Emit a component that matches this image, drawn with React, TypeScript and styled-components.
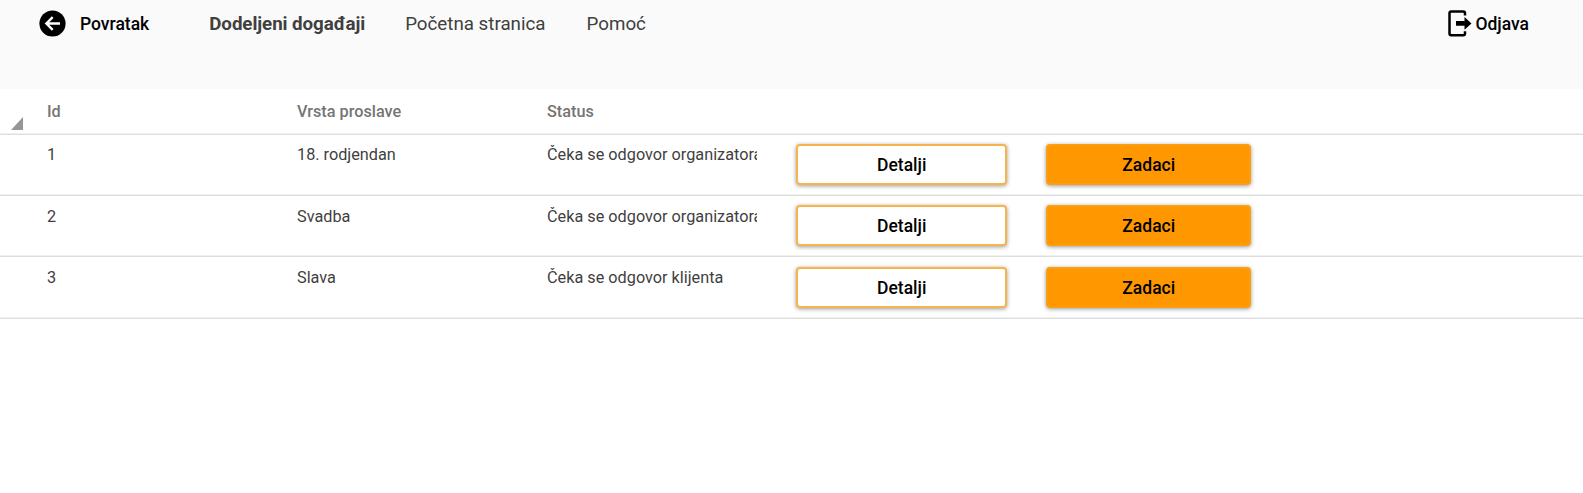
import React from "react";
import styled, { createGlobalStyle } from "styled-components";

const GlobalStyle = createGlobalStyle`
  *, *::before, *::after { box-sizing: border-box; }
  body { margin: 0; background: #fff; font-family: Roboto, sans-serif; color: #3f3f3f; }
`;

const Toolbar = styled.header`
  display: flex;
  align-items: flex-start;
  height: 89px;
  padding: 10px 54px 0 39px;
  background: #fafafa;
`;

const Action = styled.a<{ $gap: number }>`
  display: flex;
  align-items: center;
  gap: ${(p) => p.$gap}px;
  height: 27px;
  font-size: 17.5px;
  font-weight: 500;
  color: #000;
  white-space: nowrap;
`;

const Nav = styled.nav`
  display: flex;
  flex: 1;
  gap: 41px;
  margin: 1px 0 0 60px;
`;

const NavLink = styled.a<{ $active?: boolean }>`
  font-size: 18.75px;
  line-height: 27px;
  font-weight: ${(p) => (p.$active ? 700 : 400)};
  letter-spacing: ${(p) => (p.$active ? "-0.07px" : "0")};
  margin-right: ${(p) => (p.$active ? "-1px" : "0")};
  white-space: nowrap;
`;

const Table = styled.div`
  font-size: 16.25px;
`;

const columns = `
  display: grid;
  grid-template-columns: 250px 250px 250px 250px 250px;
  padding-left: 27px;
`;

const HeaderRow = styled.div`
  ${columns}
  position: relative;
  height: 46px;
  border-bottom: 1px solid #dedede;
  box-shadow: inset 0 -1px #f0f0f0;
`;

const Row = styled.div<{ $height: number }>`
  ${columns}
  height: ${(p) => p.$height}px;
  border-bottom: 1px solid #dedede;
  box-shadow: inset 0 -1px #f0f0f0;
`;

const HeaderCell = styled.div`
  padding: 13px 20px 0;
  line-height: 20px;
  font-weight: 500;
  color: #757575;
`;

const Cell = styled.div<{ $top: number }>`
  padding: ${(p) => p.$top}px 20px 0;
  line-height: 20px;
`;

const Clip = styled.div`
  overflow: hidden;
  white-space: nowrap;
`;

const ButtonCell = styled.div<{ $top: number }>`
  padding: ${(p) => p.$top}px 0 0 19px;
`;

const Button = styled.button<{ $filled?: boolean }>`
  display: block;
  width: ${(p) => (p.$filled ? 204.5 : 210.5)}px;
  height: 41px;
  padding: 0 0 0 1px;
  border: 2px solid ${(p) => (p.$filled ? "#fd9d12" : "#f8b34a")};
  border-radius: 4px;
  background: ${(p) => (p.$filled ? "#ff9800" : "#fff")};
  box-shadow: 0 1px 4px rgba(0, 0, 0, 0.4);
  font: 500 17.5px Roboto, sans-serif;
  color: #000;
`;

const Corner = styled.span`
  position: absolute;
  left: 11px;
  bottom: 4px;
  width: 12px;
  height: 13px;
  background: #969696;
  clip-path: polygon(100% 0, 100% 100%, 0 100%);
`;

const events = [
  { id: 1, kind: "18. rodjendan", status: "Čeka se odgovor organizatora", height: 61, textTop: 10, buttonTop: 9 },
  { id: 2, kind: "Svadba", status: "Čeka se odgovor organizatora", height: 61, textTop: 11, buttonTop: 9 },
  { id: 3, kind: "Slava", status: "Čeka se odgovor klijenta", height: 62, textTop: 11, buttonTop: 10 },
];

const BackIcon = () => (
  <svg width="27" height="27" viewBox="0 0 27 27">
    <circle cx="13.5" cy="13.5" r="13.1" fill="#000" />
    <path d="M21 13.5H7.5M13.7 7.2L7.4 13.5L13.7 19.8" fill="none" stroke="#fff" strokeWidth="2.4" />
  </svg>
);

const LogoutIcon = () => (
  <svg width="24" height="27" viewBox="0 0 24 27">
    <path d="M17 5.5V3.2Q17 1.5 15.3 1.5H3.2Q1.5 1.5 1.5 3.2V23.5Q1.5 25.2 3.2 25.2H15.3Q17 25.2 17 23.5V21.2" fill="none" stroke="#000" strokeWidth="2.5" />
    <path d="M8 11H16.5V7L23.5 13.4L16.5 19.8V15.8H8Z" fill="#000" />
  </svg>
);

export default function App() {
  return (
    <>
      <GlobalStyle />
      <Toolbar>
        <Action $gap={14}><BackIcon />Povratak</Action>
        <Nav>
          <NavLink $active>Dodeljeni događaji</NavLink>
          <NavLink>Početna stranica</NavLink>
          <NavLink>Pomoć</NavLink>
        </Nav>
        <Action $gap={3}><LogoutIcon />Odjava</Action>
      </Toolbar>
      <Table>
        <HeaderRow>
          <Corner />
          <HeaderCell>Id</HeaderCell>
          <HeaderCell>Vrsta proslave</HeaderCell>
          <HeaderCell>Status</HeaderCell>
        </HeaderRow>
        {events.map((e) => (
          <Row key={e.id} $height={e.height}>
            <Cell $top={e.textTop}>{e.id}</Cell>
            <Cell $top={e.textTop}>{e.kind}</Cell>
            <Cell $top={e.textTop}><Clip>{e.status}</Clip></Cell>
            <ButtonCell $top={e.buttonTop}><Button>Detalji</Button></ButtonCell>
            <ButtonCell $top={e.buttonTop}><Button $filled>Zadaci</Button></ButtonCell>
          </Row>
        ))}
      </Table>
    </>
  );
}
